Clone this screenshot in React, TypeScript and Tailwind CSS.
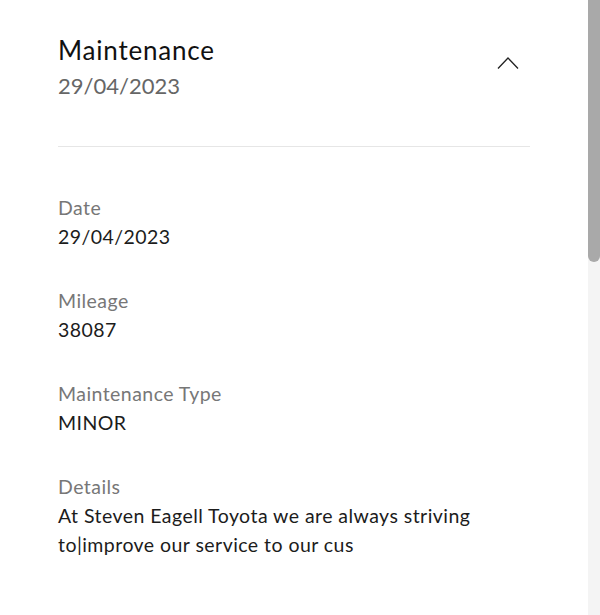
const fields = [
  { label: "Date", value: "29/04/2023" },
  { label: "Mileage", value: "38087" },
  { label: "Maintenance Type", value: "MINOR" },
];

export default function App() {
  return (
    <div className="flex h-[615px] w-[600px] overflow-hidden bg-white font-['Lato',sans-serif]">
      <div className="flex-1 pl-[58px] pr-[58px]">
        {/* Header */}
        <div className="flex items-start justify-between pt-[33px] pb-[45px] border-b border-[#e6e6e6]">
          <div>
            <h1 className="text-[26px] leading-[34px] tracking-[0.8px] text-[#111]">Maintenance</h1>
            <p className="mt-[4px] text-[22px] leading-[30px] text-[#666]">29/04/2023</p>
          </div>
          <svg className="mt-[23px] mr-[11px]" width="22" height="14" viewBox="0 0 22 14" fill="none">
            <polyline points="1,12.5 11,2 21,12.5" stroke="#222" strokeWidth="1.3" />
          </svg>
        </div>

        {/* Fields */}
        <div className="flex flex-col gap-[35px] pt-[46px]">
          {fields.map((f) => (
            <div key={f.label}>
              <div className="text-[19.5px] leading-[29px] tracking-[0.45px] text-[#777]">{f.label}</div>
              <div className="text-[19.5px] leading-[29px] tracking-[0.45px] text-[#1c1c1c]">{f.value}</div>
            </div>
          ))}
          <div>
            <div className="text-[19.5px] leading-[29px] tracking-[0.45px] text-[#777]">Details</div>
            <div className="text-[19.5px] leading-[29px] tracking-[0.45px] text-[#1c1c1c]">
              At Steven Eagell Toyota we are always striving
              <br />
              to|improve our service to our cus
            </div>
          </div>
        </div>
      </div>

      {/* Scrollbar */}
      <div className="w-[12px] bg-[#f4f4f4]">
        <div className="h-[262px] rounded-b-[6px] bg-[#a9a9a9]" />
      </div>
    </div>
  );
}
